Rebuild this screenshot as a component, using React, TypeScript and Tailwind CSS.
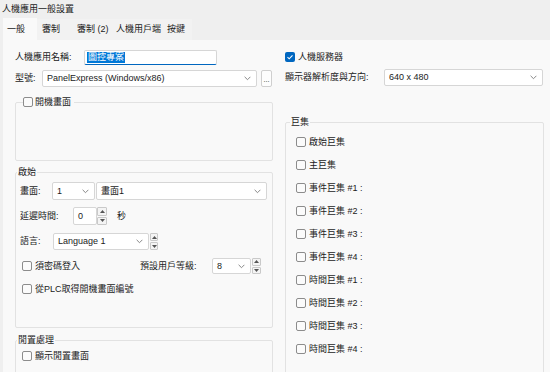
import React from "react";

function Cb({ checked = false }: { checked?: boolean }) {
  if (checked) {
    return (
      <span className="inline-flex w-[10px] h-[10px] shrink-0 items-center justify-center rounded-[2px] bg-[#0067c0]">
        <svg width="8" height="8" viewBox="0 0 8 8">
          <path d="M1.5 4.2 L3.2 5.8 L6.5 2.3" stroke="#fff" strokeWidth="1.1" fill="none" />
        </svg>
      </span>
    );
  }
  return <span className="inline-block w-[10px] h-[10px] shrink-0 rounded-[2px] border border-[#8c8c8c] bg-[#fbfbfb]" />;
}

function Chevron() {
  return (
    <svg width="7" height="5" viewBox="0 0 7 5" className="shrink-0">
      <path d="M0.6 0.8 L3.5 3.7 L6.4 0.8" stroke="#7a7a7a" strokeWidth="0.9" fill="none" />
    </svg>
  );
}

function Select({ w, h = 17, text }: { w: string; h?: number; text: string }) {
  return (
    <div
      className={`${w} flex items-center justify-between rounded-[2px] border border-[#d6d6d6] bg-white pl-[4px] pr-[5px]`}
      style={{ height: h }}
    >
      <span>{text}</span>
      <Chevron />
    </div>
  );
}

function Spin({ w = "w-[10px]", h = 18 }: { w?: string; h?: number }) {
  return (
    <div className={`${w} flex flex-col gap-[1px]`} style={{ height: h }}>
      <div className="flex flex-1 items-center justify-center rounded-[1px] border border-[#c9c9c9] bg-[#f4f4f4]">
        <svg width="5" height="3" viewBox="0 0 5 3">
          <path d="M0 3 L2.5 0 L5 3 Z" fill="#555" />
        </svg>
      </div>
      <div className="flex flex-1 items-center justify-center rounded-[1px] border border-[#c9c9c9] bg-[#f4f4f4]">
        <svg width="5" height="3" viewBox="0 0 5 3">
          <path d="M0 0 L2.5 3 L5 0 Z" fill="#555" />
        </svg>
      </div>
    </div>
  );
}

function CbRow({ label, checked = false }: { label: string; checked?: boolean }) {
  return (
    <div className="flex h-[14px] items-center gap-[3px]">
      <Cb checked={checked} />
      <span>{label}</span>
    </div>
  );
}

export default function App() {
  const macros = [
    "啟始巨集",
    "主巨集",
    "事件巨集 #1 :",
    "事件巨集 #2 :",
    "事件巨集 #3 :",
    "事件巨集 #4 :",
    "時間巨集 #1 :",
    "時間巨集 #2 :",
    "時間巨集 #3 :",
    "時間巨集 #4 :",
  ];
  return (
    <div className="w-[550px] h-[372px] overflow-hidden bg-[#efefef] text-[9px] leading-none text-[#1b1b1b] font-['Liberation_Sans','Noto_Sans_CJK_TC',sans-serif]">
      {/* title */}
      <div className="flex h-[18px] items-center pl-[2px] text-[9px]">人機應用一般設置</div>
      {/* tabs */}
      <div className="flex h-[22px] items-end pl-[3px]">
        <div className="flex h-[22px] w-[34px] items-center bg-[#f9f9f9] pl-[4px] pt-[1px]">一般</div>
        <div className="flex h-[21px] w-[33px] items-center bg-[#f2f2f2] pl-[5px]">審制</div>
        <div className="flex h-[21px] w-[42px] items-center bg-[#f2f2f2] pl-[7px]">審制 (2)</div>
        <div className="flex h-[21px] w-[50px] items-center bg-[#f2f2f2] pl-[4px]">人機用戶端</div>
        <div className="flex h-[21px] w-[30px] items-center bg-[#f2f2f2] pl-[5px]">按鍵</div>
      </div>
      {/* content */}
      <div className="ml-[3px] flex h-[332px] gap-[10px] bg-[#f9f9f9] pl-[12px] pt-[10px]">
        {/* left column */}
        <div className="flex w-[260px] flex-col">
          <div className="flex h-[15px] items-center">
            <span className="w-[69px]">人機應用名稱:</span>
            <div className="flex h-[15px] w-[133px] items-center rounded-[2px] border border-[#d6d6d6] border-b-[#0067c0] bg-white pl-[2px]">
              <span className="bg-[#0078d7] px-[1px] py-[1px] text-white">圖控專案</span>
            </div>
          </div>
          <div className="mt-[5px] flex h-[17px] items-center">
            <span className="w-[27px]">型號:</span>
            <Select w="w-[215px]" text="PanelExpress (Windows/x86)" />
            <div className="ml-[4px] flex h-[17px] w-[11px] items-end justify-center rounded-[2px] border border-[#cfcfcf] bg-[#fdfdfd] pb-[3px] text-[7px]">...</div>
          </div>

          <fieldset className="mt-[9px] w-[258px] rounded-[2px] border border-[#e2e2e2]">
            <legend className="ml-[7px] flex h-[12px] items-center gap-[2px] pr-[3px]">
              <Cb />
              <span>開機畫面</span>
            </legend>
            <div className="h-[52px]" />
          </fieldset>

          <fieldset className="mt-[5px] w-[258px] rounded-[2px] border border-[#e2e2e2] pl-[4px]">
            <legend className="-ml-[3px] flex h-[12px] items-center px-[1px]">啟始</legend>
            <div className="mt-[4px] flex h-[18px] items-center">
              <span className="w-[32px]">畫面:</span>
              <Select w="w-[43px]" h={18} text="1" />
              <div className="w-[1px]" />
              <Select w="w-[171px]" h={18} text="畫面1" />
            </div>
            <div className="mt-[7px] flex h-[18px] items-center">
              <span className="w-[53px]">延遲時間:</span>
              <div className="flex h-[18px] w-[24px] items-center rounded-[2px] border border-[#d6d6d6] bg-white pl-[4px]">0</div>
              <Spin />
              <span className="ml-[10px]">秒</span>
            </div>
            <div className="mt-[8px] flex h-[17px] items-center">
              <span className="w-[33px]">語言:</span>
              <Select w="w-[96px]" text="Language 1" />
              <div className="ml-[1px]">
                <Spin w="w-[8px]" h={17} />
              </div>
            </div>
            <div className="mt-[8px] flex h-[16px] items-center">
              <div className="flex w-[120px] items-center gap-[3px] pl-[2px]">
                <Cb />
                <span>須密碼登入</span>
              </div>
              <span className="w-[72px]">預設用戶等級:</span>
              <Select w="w-[39px]" h={16} text="8" />
              <div className="ml-[1px]">
                <Spin w="w-[9px]" h={16} />
              </div>
            </div>
            <div className="mt-[8px] pl-[2px]">
              <CbRow label="從PLC取得開機畫面編號" />
            </div>
            <div className="h-[31px]" />
          </fieldset>

          <fieldset className="mt-[6px] w-[258px] rounded-[2px] border border-[#e2e2e2] pl-[6px]">
            <legend className="-ml-[5px] flex h-[12px] items-center px-[1px]">閒置處理</legend>
            <div className="mt-[3px]">
              <CbRow label="顯示閒置畫面" />
            </div>
            <div className="h-[30px]" />
          </fieldset>
        </div>

        {/* right column */}
        <div className="flex w-[259px] flex-col">
          <div className="flex h-[15px] items-center">
            <CbRow label="人機服務器" checked />
          </div>
          <div className="mt-[5px] flex h-[17px] items-center">
            <span className="w-[99px]">顯示器解析度與方向:</span>
            <Select w="w-[159px]" text="640 x 480" />
          </div>
          <fieldset className="mt-[30px] w-[259px] rounded-[2px] border border-[#e2e2e2] pl-[10px]">
            <legend className="-ml-[6px] flex h-[12px] items-center px-[1px]">巨集</legend>
            <div className="mt-[7px] flex flex-col gap-[9px]">
              {macros.map((m) => (
                <CbRow key={m} label={m} />
              ))}
            </div>
            <div className="h-[30px]" />
          </fieldset>
        </div>
      </div>
    </div>
  );
}
